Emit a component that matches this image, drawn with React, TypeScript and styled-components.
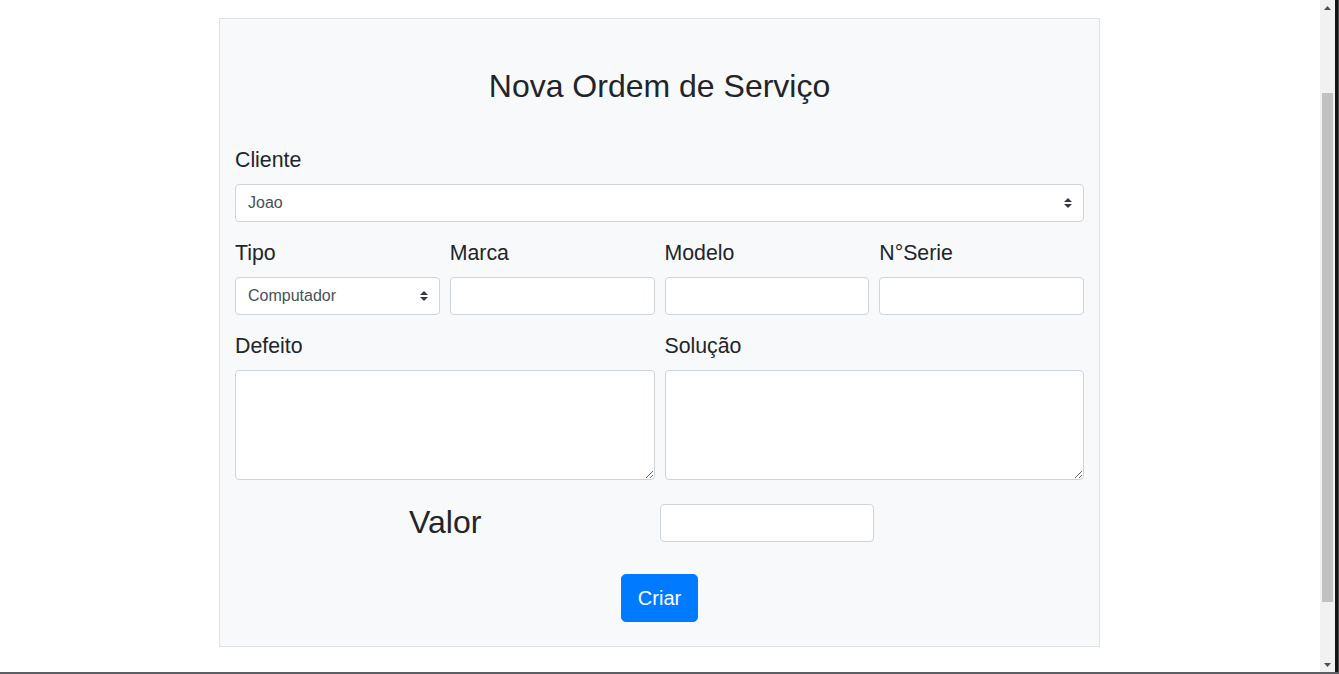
import React from "react";
import styled, { createGlobalStyle } from "styled-components";

const GlobalStyle = createGlobalStyle`
  html, body { margin: 0; padding: 0; overflow: hidden; background: #fff; }
  body { font-family: "Liberation Sans", Arial, sans-serif; color: #212529; }
  * { box-sizing: border-box; }
`;

const Frame = styled.div`
  width: 1339px;
  height: 674px;
  display: flex;
  flex-direction: column;
`;

const Window = styled.div`
  flex: 1;
  display: flex;
  min-height: 0;
`;

const Viewport = styled.main`
  flex: 1;
  overflow: hidden;
  background: #fff;
  padding-top: 18px;
`;

const ScrollTrack = styled.div`
  width: 15px;
  background: #f1f1f1;
  display: flex;
  flex-direction: column;
  align-items: center;
`;

const ScrollArrow = styled.div`
  height: 15px;
  width: 15px;
  display: flex;
  align-items: center;
  justify-content: center;
  flex: none;
`;

const ScrollGap = styled.div<{ $h: number }>`
  height: ${(p) => p.$h}px;
  flex: none;
`;

const ScrollThumb = styled.div`
  width: 11px;
  height: 509px;
  background: #c1c1c1;
  flex: none;
`;

const WindowEdge = styled.div`
  width: 4px;
  background: #141414;
  border-right: 1px solid #4a4a4a;
`;

const BottomEdge = styled.div`
  height: 2px;
  background: #5b5f63;
`;

const Card = styled.form`
  width: 881px;
  margin-left: 219px;
  background: #f8f9fa;
  border: 1px solid #dee2e6;
  padding: 48px 15px 24px;
`;

const Title = styled.h2`
  margin: 0 0 40px;
  font-size: 32px;
  font-weight: 400;
  line-height: 1.2;
  text-align: center;
  color: #212529;
`;

const Group = styled.div`
  display: flex;
  flex-direction: column;
  margin-bottom: 16px;
  min-width: 0;
`;

const Row = styled.div<{ $cols: number }>`
  display: grid;
  grid-template-columns: repeat(${(p) => p.$cols}, 1fr);
  column-gap: 10px;
`;

const Label = styled.label`
  font-size: 21.3px;
  line-height: 31px;
  margin-bottom: 8px;
  color: #212529;
`;

const fieldBase = `
  display: block;
  width: 100%;
  height: 38px;
  padding: 6px 12px;
  font-family: "Liberation Sans", Arial, sans-serif;
  font-size: 16px;
  line-height: 24px;
  color: #495057;
  background: #fff;
  border: 1px solid #ced4da;
  border-radius: 4px;
  outline: none;
`;

const Input = styled.input`
  ${fieldBase}
`;

const SelectWrap = styled.div`
  position: relative;
`;

const Select = styled.select`
  ${fieldBase}
  appearance: none;
  -webkit-appearance: none;
  padding-right: 28px;
`;

const SelectArrow = styled.svg`
  position: absolute;
  right: 12px;
  top: 14px;
  width: 8px;
  height: 10px;
  pointer-events: none;
`;

const TextArea = styled.textarea`
  ${fieldBase}
  height: 110px;
  resize: vertical;
`;

const ValorRow = styled.div`
  display: grid;
  grid-template-columns: 1fr 1fr;
  align-items: center;
  padding: 7px 0 8px;
  margin-bottom: 24px;
`;

const ValorLabel = styled.label`
  font-size: 32px;
  line-height: 1.2;
  text-align: center;
  color: #212529;
  padding-right: 4px;
`;

const ValorInput = styled(Input)`
  width: 214px;
`;

const Actions = styled.div`
  display: flex;
  justify-content: center;
`;

const Button = styled.button`
  font-family: "Liberation Sans", Arial, sans-serif;
  font-size: 20px;
  line-height: 30px;
  padding: 8px 16px;
  color: #fff;
  background: #007bff;
  border: 1px solid #007bff;
  border-radius: 4.8px;
  cursor: pointer;
`;

const Arrow = () => (
  <SelectArrow viewBox="0 0 4 5">
    <path fill="#343a40" d="M2 0L0 2h4zm0 5L0 3h4z" />
  </SelectArrow>
);

const Tri = ({ down }: { down?: boolean }) => (
  <svg width="7" height="4" viewBox="0 0 7 4">
    <path fill="#505050" d={down ? "M0 0h7L3.5 4z" : "M3.5 0L7 4H0z"} />
  </svg>
);

export default function App() {
  return (
    <>
      <GlobalStyle />
      <Frame>
        <Window>
          <Viewport>
            <Card onSubmit={(e) => e.preventDefault()}>
              <Title>Nova Ordem de Serviço</Title>
              <Group>
                <Label>Cliente</Label>
                <SelectWrap>
                  <Select defaultValue="Joao">
                    <option>Joao</option>
                  </Select>
                  <Arrow />
                </SelectWrap>
              </Group>
              <Row $cols={4}>
                <Group>
                  <Label>Tipo</Label>
                  <SelectWrap>
                    <Select defaultValue="Computador">
                      <option>Computador</option>
                    </Select>
                    <Arrow />
                  </SelectWrap>
                </Group>
                <Group>
                  <Label>Marca</Label>
                  <Input type="text" />
                </Group>
                <Group>
                  <Label>Modelo</Label>
                  <Input type="text" />
                </Group>
                <Group>
                  <Label>N°Serie</Label>
                  <Input type="text" />
                </Group>
              </Row>
              <Row $cols={2}>
                <Group>
                  <Label>Defeito</Label>
                  <TextArea rows={4} />
                </Group>
                <Group>
                  <Label>Solução</Label>
                  <TextArea rows={4} />
                </Group>
              </Row>
              <ValorRow>
                <ValorLabel>Valor</ValorLabel>
                <ValorInput type="text" />
              </ValorRow>
              <Actions>
                <Button type="submit">Criar</Button>
              </Actions>
            </Card>
          </Viewport>
          <ScrollTrack>
            <ScrollArrow>
              <Tri />
            </ScrollArrow>
            <ScrollGap $h={78} />
            <ScrollThumb />
            <ScrollGap $h={55} />
            <ScrollArrow>
              <Tri down />
            </ScrollArrow>
          </ScrollTrack>
          <WindowEdge />
        </Window>
        <BottomEdge />
      </Frame>
    </>
  );
}
